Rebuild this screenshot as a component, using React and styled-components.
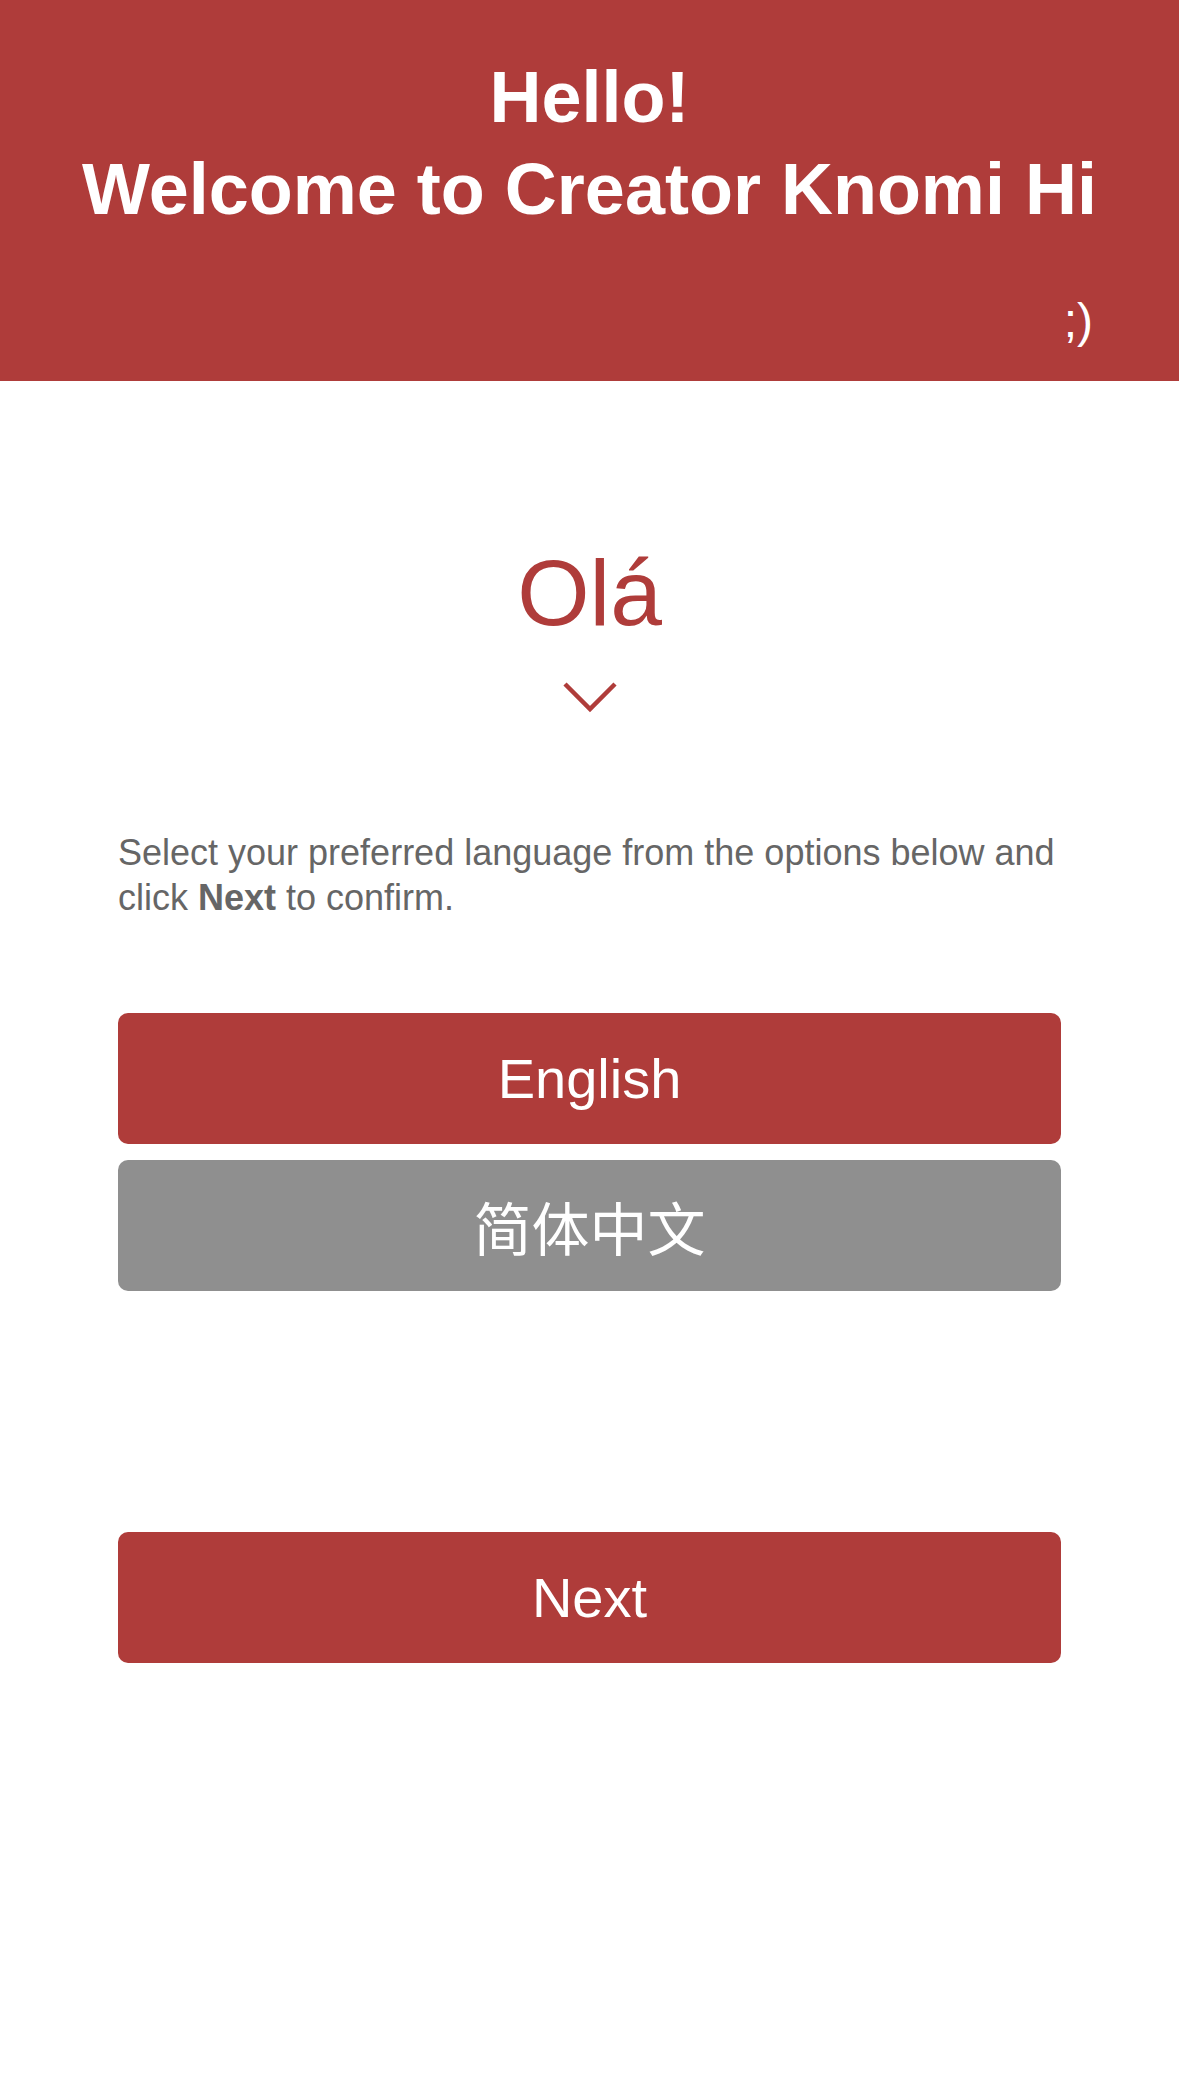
import React from "react";
import styled, { createGlobalStyle } from "styled-components";

const Global = createGlobalStyle`
  html, body { margin: 0; padding: 0; background: #ffffff; }
  body { font-family: "Liberation Sans", Arial, sans-serif; }
  * { box-sizing: border-box; }
`;

const Page = styled.div`
  width: 1179px;
  min-height: 2075px;
  background: #ffffff;
  display: flex;
  flex-direction: column;
`;

const Header = styled.header`
  background: #af3c3a;
  height: 381px;
  padding: 51px 0 33px;
  display: flex;
  flex-direction: column;
  color: #ffffff;
`;

const Title = styled.h1`
  margin: 0;
  font-family: "Liberation Sans", Arial, sans-serif;
  font-weight: 700;
  font-size: 72px;
  line-height: 92px;
  text-align: center;
  white-space: nowrap;
`;

const Wink = styled.div`
  margin-top: auto;
  align-self: flex-end;
  padding-right: 86px;
  font-size: 48px;
  line-height: 55px;
`;

const Main = styled.main`
  display: flex;
  flex-direction: column;
  padding: 0 118px;
`;

const Greeting = styled.div`
  margin-top: 164px;
  font-size: 93px;
  line-height: 96px;
  color: #af3c3a;
  text-align: center;
`;

const Chevron = styled.svg`
  display: block;
  align-self: center;
  margin-top: 40px;
`;

const Intro = styled.p`
  margin: 117px 0 0;
  font-size: 36px;
  line-height: 45px;
  color: #666666;
  b { font-weight: 700; }
`;

const LangList = styled.div`
  margin-top: 93px;
  display: flex;
  flex-direction: column;
  gap: 16px;
`;

const Button = styled.button`
  height: 131px;
  width: 100%;
  border: none;
  border-radius: 10px;
  background: ${(p) => (p.$variant === "muted" ? "#8f8f8f" : "#af3c3a")};
  color: #ffffff;
  font-family: "Liberation Sans", Arial, "Noto Sans CJK SC", sans-serif;
  font-size: ${(p) => (p.$cjk ? "58px" : "56px")};
  font-weight: 400;
  display: flex;
  align-items: center;
  justify-content: center;
  padding: 0;
  cursor: pointer;
`;

const NextButton = styled(Button)`
  margin-top: 241px;
`;

export default function App() {
  return (
    <Page>
      <Global />
      <Header>
        <Title>
          Hello!
          <br />
          Welcome to Creator Knomi Hi
        </Title>
        <Wink>;)</Wink>
      </Header>
      <Main>
        <Greeting>Olá</Greeting>
        <Chevron width="56" height="32" viewBox="0 0 56 32">
          <polyline
            points="3,3 28,28 53,3"
            fill="none"
            stroke="#af3c3a"
            strokeWidth="4.5"
          />
        </Chevron>
        <Intro>
          Select your preferred language from the options below and click{" "}
          <b>Next</b> to confirm.
        </Intro>
        <LangList>
          <Button>English</Button>
          <Button $variant="muted" $cjk>
            简体中文
          </Button>
        </LangList>
        <NextButton>Next</NextButton>
      </Main>
    </Page>
  );
}
